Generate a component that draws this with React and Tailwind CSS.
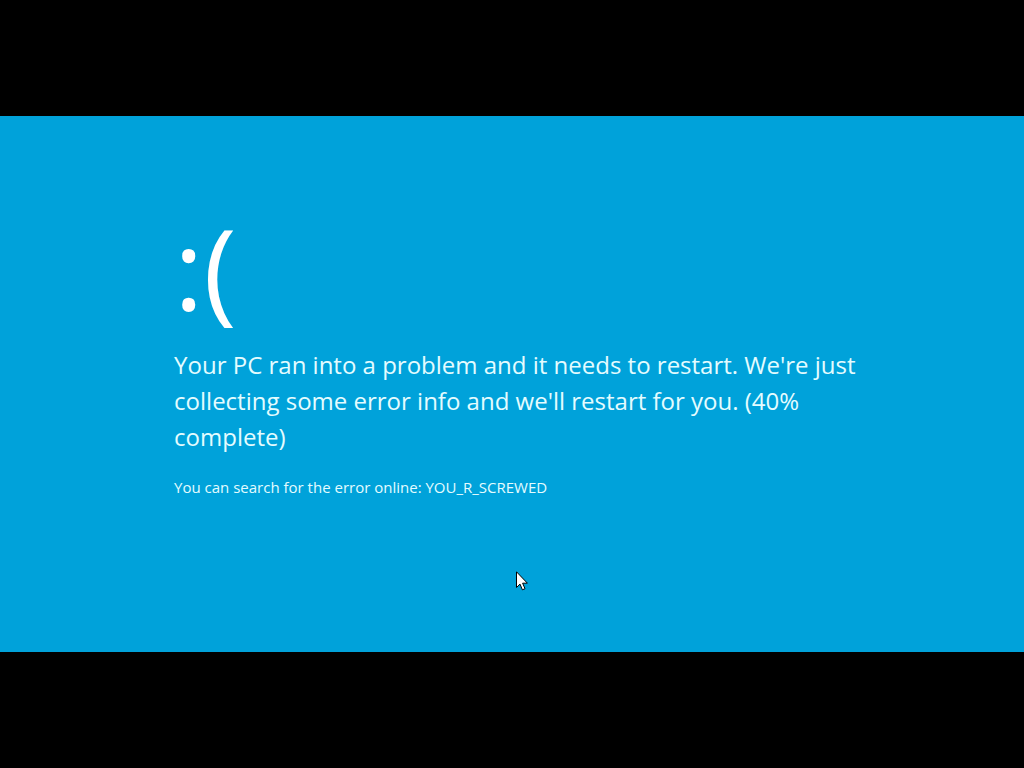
import React from 'react';

const errorInfo = {
  progress: 40,
  code: 'YOU_R_SCREWED'
};

// Mouse pointer left on top of the stop screen
const MousePointer = () => (
  <svg
    className="absolute left-[516px] top-[571px]"
    width="12"
    height="20"
    viewBox="0 0 12 20"
    aria-hidden="true"
  >
    <path
      d="M.5 .8V16.5L4 13.1L6.4 18.8L9 17.7L6.6 12.2H11.4Z"
      fill="#fff"
      stroke="#000"
      strokeWidth="1"
    />
  </svg>
);

const StopScreen = ({ progress, code }) => (
  <main className="flex-1 bg-[#00a2da] pl-[17%] pr-[15%] pt-[83px] text-[#e4fcff]">
    <h1 className="mb-3 text-[112px] leading-[136px] font-normal text-white">:(</h1>
    <p className="text-[24px] leading-[36px] font-normal">
      {`Your PC ran into a problem and it needs to restart. We're just collecting some error info and we'll restart for you. (${progress}% complete)`}
    </p>
    <p className="mt-[22px] text-[15px] leading-[20px] font-normal">
      {`You can search for the error online: ${code}`}
    </p>
  </main>
);

export default function App() {
  return (
    <div className="relative flex min-h-screen flex-col bg-black py-[116px] font-['Open_Sans',sans-serif]">
      <StopScreen progress={errorInfo.progress} code={errorInfo.code} />
      <MousePointer />
    </div>
  );
}
